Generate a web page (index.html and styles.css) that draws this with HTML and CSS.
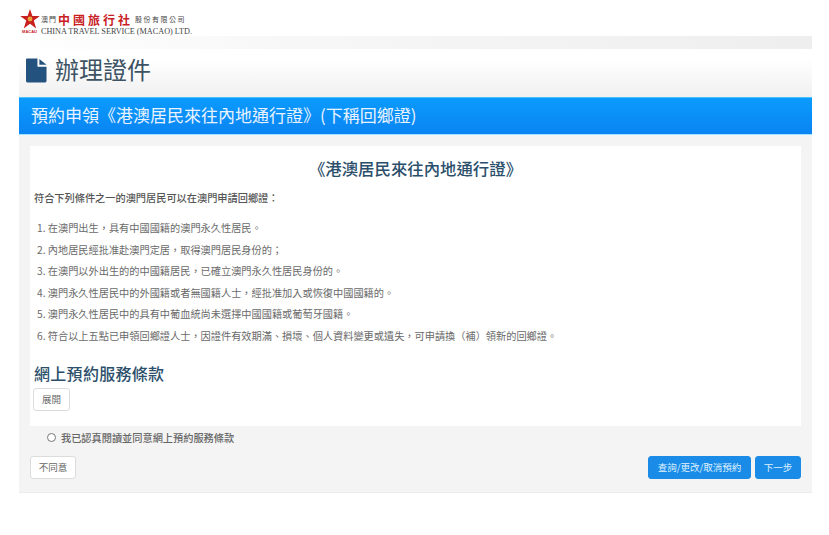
FILE: index.html
```html
<!DOCTYPE html>
<html lang="zh-Hant">
<head>
<meta charset="utf-8">
<title>辦理證件</title>
<link rel="stylesheet" href="styles.css">
</head>
<body>
<header class="logo">
  <div class="logo-mark">
    <svg class="star" viewBox="0 0 20 20" width="20" height="20"><polygon points="10,0 12.400,7 19.800,7 13.800,11.600 16.200,19.500 10,14.800 3.800,19.500 6.200,11.600 0.200,7 7.600,7" fill="#c8201f"/><circle cx="10" cy="10" r="2.400" fill="#e8a33a"/></svg>
    <span class="macau">MACAU</span>
  </div>
  <div class="logo-text">
    <div class="logo-cn"><span class="cn-sm">澳門</span><span class="cn-red">中國旅行社</span><span class="cn-sm cn-tail">股份有限公司</span></div>
    <div class="logo-en">CHINA TRAVEL SERVICE (MACAO) LTD.</div>
  </div>
</header>
<div class="top-bar"></div>
<div class="page-title">
  <svg class="doc-icon" viewBox="0 0 22 25" width="21" height="25"><path d="M1 0H12V8.500H21.500V23.500Q21.500 25 20 25H1.500Q0 25 0 23.500V1Q0 0 1 0ZM14 0.500L21.500 6.500H14Z" fill="#24527f"/></svg>
  <h1>辦理證件</h1>
</div>
<main class="panel">
  <div class="panel-head">預約申領《港澳居民來往內地通行證》(下稱回鄉證)</div>
  <div class="panel-body">
    <section class="notice">
      <h2>《港澳居民來往內地通行證》</h2>
      <p class="lead">符合下列條件之一的澳門居民可以在澳門申請回鄉證：</p>
      <ol class="conds">
        <li>1. 在澳門出生，具有中國國籍的澳門永久性居民。</li>
        <li>2. 內地居民經批准赴澳門定居，取得澳門居民身份的；</li>
        <li>3. 在澳門以外出生的的中國籍居民，已確立澳門永久性居民身份的。</li>
        <li>4. 澳門永久性居民中的外國籍或者無國籍人士，經批准加入或恢復中國國籍的。</li>
        <li>5. 澳門永久性居民中的具有中葡血統尚未選擇中國國籍或葡萄牙國籍。</li>
        <li>6. 符合以上五點已申領回鄉證人士，因證件有效期滿、損壞、個人資料變更或遺失，可申請換（補）領新的回鄉證。</li>
      </ol>
      <h3>網上預約服務條款</h3>
      <button class="btn btn-expand" type="button">展開</button>
    </section>
    <label class="agree"><span class="radio"></span>我已認真閱讀並同意網上預約服務條款</label>
    <div class="actions">
      <button class="btn btn-decline" type="button">不同意</button>
      <div class="actions-right">
        <button class="btn btn-primary btn-query" type="button">查詢/更改/取消預約</button>
        <button class="btn btn-primary btn-next" type="button">下一步</button>
      </div>
    </div>
  </div>
</main>
</body>
</html>
```

FILE: styles.css
```css
* { box-sizing: border-box; }
html, body { margin: 0; padding: 0; background: #fff; }
body {
  width: 829px;
  height: 535px;
  overflow: hidden;
  padding: 9px 17px 0 19px;
  font-family: "Noto Sans CJK TC", "Liberation Sans", sans-serif;
  color: #555;
}
.logo { display: flex; align-items: flex-start; height: 27px; gap: 1px; }
.logo-mark { width: 21px; display: flex; flex-direction: column; align-items: center; }
.star { display: block; }
.macau { font: bold 4px/5px "Liberation Sans", sans-serif; color: #c8201f; }
.logo-text { padding-top: 4px; }
.logo-cn { display: flex; align-items: center; height: 13px; line-height: 13px; white-space: nowrap; }
.cn-sm { font-size: 7px; letter-spacing: 1px; color: #444; }
.cn-red { font-size: 12px; line-height: 13px; font-weight: 700; color: #c8201f; margin: 0 2px 0 1px; letter-spacing: 3px; }
.cn-tail { letter-spacing: 1.500px; }
.logo-en { margin-top: 1px; font: 8.200px/9px "Liberation Serif", serif; color: #444; white-space: nowrap; }
.top-bar { height: 13px; background: linear-gradient(90deg, #fff 0, #f7f7f7 35%, #eee 100%); }
.page-title {
  display: flex;
  align-items: flex-start;
  gap: 8px;
  height: 48px;
  padding: 9px 0 0 7px;
  background: linear-gradient(180deg, #fff 20%, #f0f0f0 100%);
}
.doc-icon { display: block; }
.page-title h1 { margin: -6px 0 0; font-size: 24px; line-height: 34px; font-weight: 400; color: #3d5364; }
.panel-head {
  height: 38px;
  padding-left: 12px;
  background: linear-gradient(180deg, #0a9bfd 0, #0a84f2 100%);
  color: #e8f3ff;
  font-size: 17px;
  line-height: 34px;
  white-space: nowrap;
  border-top: 1px solid #4cc0ff;
  border-bottom: 1px solid #a0e4ff;
}
.panel-body {
  height: 358px;
  padding: 11px 11px 0;
  background: #f4f4f4;
  border-bottom: 1px solid #ebebeb;
}
.notice { height: 280px; background: #fff; padding: 8px 4px 0; }
.notice h2 {
  margin: 0;
  height: 28px;
  font-size: 16.400px;
  line-height: 28px;
  font-weight: 500;
  text-align: center;
  color: #2b4f6b;
}
.lead { margin: 5px 0 0; height: 22px; font-size: 10.200px; line-height: 22px; font-weight: 500; color: #555; }
.conds { list-style: none; margin: 8px 0 0; padding: 0 0 0 3px; }
.conds li { height: 21.500px; font-size: 10.200px; line-height: 21.500px; color: #6a6a6a; white-space: nowrap; }
.notice h3 { margin: 13px 0 0; height: 28px; font-size: 16px; line-height: 28px; font-weight: 500; color: #2b4f6b; letter-spacing: 0.300px; }
.btn {
  display: block;
  height: 23px;
  padding: 0 9px;
  border: 1px solid #dcdcdc;
  border-radius: 3px;
  background: #fff;
  color: #666;
  font: 9.500px/21px "Noto Sans CJK TC", sans-serif;
}
.btn-expand { width: 37px; padding: 0; margin: 1px 0 0 -1px; }
.btn-decline { width: 46px; padding: 0; }
.agree { display: flex; align-items: center; height: 23px; padding-left: 17px; font-size: 10.200px; font-weight: 500; color: #666; }
.radio { width: 9px; height: 9px; margin-right: 5px; border: 1px solid #777; border-radius: 50%; background: #fff; }
.actions { display: flex; justify-content: space-between; align-items: flex-start; margin-top: 7px; }
.actions-right { display: flex; gap: 4px; }
.btn-primary { background: #1a8ce8; border-color: #1a8ce8; color: #dff0ff; }
.btn-query { width: 103px; padding: 0; }
.btn-next { width: 46px; padding: 0; }
```
